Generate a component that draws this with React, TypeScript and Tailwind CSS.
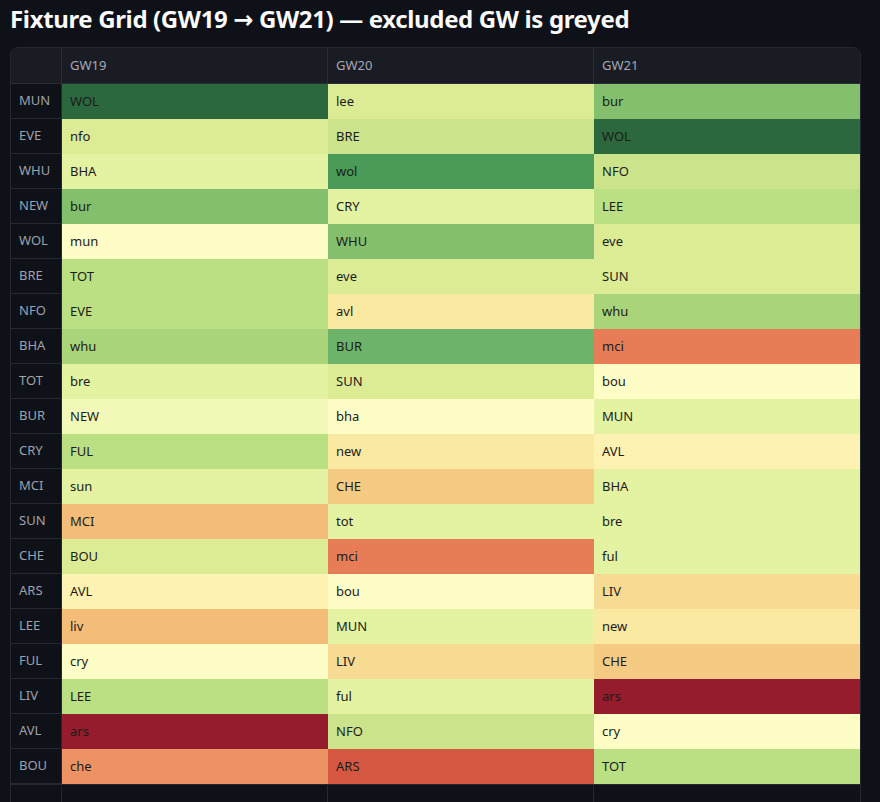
import React from "react";

type Cell = [string, string];

const rows: { team: string; cells: Cell[] }[] = [
  { team: "MUN", cells: [["WOL", "#2c683e"], ["lee", "#dbec94"], ["bur", "#84bf6e"]] },
  { team: "EVE", cells: [["nfo", "#dbec94"], ["BRE", "#cbe48b"], ["WOL", "#2c683e"]] },
  { team: "WHU", cells: [["BHA", "#e4f3a2"], ["wol", "#4a9a58"], ["NFO", "#cbe48b"]] },
  { team: "NEW", cells: [["bur", "#84bf6e"], ["CRY", "#e4f3a2"], ["LEE", "#bbdf83"]] },
  { team: "WOL", cells: [["mun", "#fefdc6"], ["WHU", "#84bf6e"], ["eve", "#dbec94"]] },
  { team: "BRE", cells: [["TOT", "#bbdf83"], ["eve", "#dbec94"], ["SUN", "#dbec94"]] },
  { team: "NFO", cells: [["EVE", "#bbdf83"], ["avl", "#fae9a0"], ["whu", "#a9d47a"]] },
  { team: "BHA", cells: [["whu", "#a9d47a"], ["BUR", "#6db36a"], ["mci", "#e67d56"]] },
  { team: "TOT", cells: [["bre", "#e4f3a2"], ["SUN", "#dbec94"], ["bou", "#fefdc6"]] },
  { team: "BUR", cells: [["NEW", "#f2f8b7"], ["bha", "#fefdc6"], ["MUN", "#e4f3a2"]] },
  { team: "CRY", cells: [["FUL", "#bbdf83"], ["new", "#fae9a0"], ["AVL", "#fdf2b2"]] },
  { team: "MCI", cells: [["sun", "#e4f3a2"], ["CHE", "#f5cb84"], ["BHA", "#e4f3a2"]] },
  { team: "SUN", cells: [["MCI", "#f3bd79"], ["tot", "#e4f3a2"], ["bre", "#e4f3a2"]] },
  { team: "CHE", cells: [["BOU", "#dbec94"], ["mci", "#e67d56"], ["ful", "#e4f3a2"]] },
  { team: "ARS", cells: [["AVL", "#fdf2b2"], ["bou", "#fefdc6"], ["LIV", "#f8db92"]] },
  { team: "LEE", cells: [["liv", "#f3bd79"], ["MUN", "#e4f3a2"], ["new", "#fae9a0"]] },
  { team: "FUL", cells: [["cry", "#fefdc6"], ["LIV", "#f8db92"], ["CHE", "#f5cb84"]] },
  { team: "LIV", cells: [["LEE", "#bbdf83"], ["ful", "#e4f3a2"], ["ars", "#951c2c"]] },
  { team: "AVL", cells: [["ars", "#951c2c"], ["NFO", "#cbe48b"], ["cry", "#fefdc6"]] },
  { team: "BOU", cells: [["che", "#ed9262"], ["ARS", "#d45841"], ["TOT", "#bbdf83"]] },
];

export default function App() {
  return (
    <div
      className="min-h-[802px] bg-[#0e1117] text-[#fafafa]"
      style={{ fontFamily: '"Noto Sans", "Open Sans", sans-serif' }}
    >
      <h3 className="h-[37px] pl-[10px] pt-[1px] text-[24px] leading-[36px] font-bold tracking-[-0.015em] text-[#fafafa]">
        Fixture Grid (GW19{" "}
        <span className="font-bold leading-none" style={{ fontFamily: '"DejaVu Sans", sans-serif' }}>
          →
        </span>{" "}
        GW21) — excluded GW is greyed
      </h3>
      <div className="ml-[10px] mt-[10px] w-[851px] overflow-hidden rounded-lg border border-[#262730]">
        <div className="grid grid-cols-[51px_266px_266px_266px]">
          <div className="h-[36px] border-r border-b border-[#2b2d36] bg-[#1a1c24]" />
          {["GW19", "GW20", "GW21"].map((g, i) => (
            <div
              key={g}
              className={`flex h-[36px] items-center border-b border-[#2b2d36] bg-[#1a1c24] pl-[8px] text-[13px] text-[#a3a8b8] ${i < 2 ? "border-r" : ""}`}
            >
              {g}
            </div>
          ))}
          {rows.map((r) => (
            <React.Fragment key={r.team}>
              <div className="flex h-[35px] items-center border-r border-b border-[#262730] bg-[#0e1117] pl-[8px] text-[13px] text-[#9da1ad]">
                {r.team}
              </div>
              {r.cells.map(([t, c], i) => (
                <div
                  key={i}
                  className="flex h-[35px] items-center pl-[8px] text-[13px] text-[#1c1c1c]"
                  style={{ backgroundColor: c }}
                >
                  {t}
                </div>
              ))}
            </React.Fragment>
          ))}
          <div className="h-[35px] border-t border-r border-[#262730]" />
          <div className="h-[35px] border-t border-r border-[#262730]" />
          <div className="h-[35px] border-t border-r border-[#262730]" />
          <div className="h-[35px] border-t border-[#262730]" />
        </div>
      </div>
    </div>
  );
}
